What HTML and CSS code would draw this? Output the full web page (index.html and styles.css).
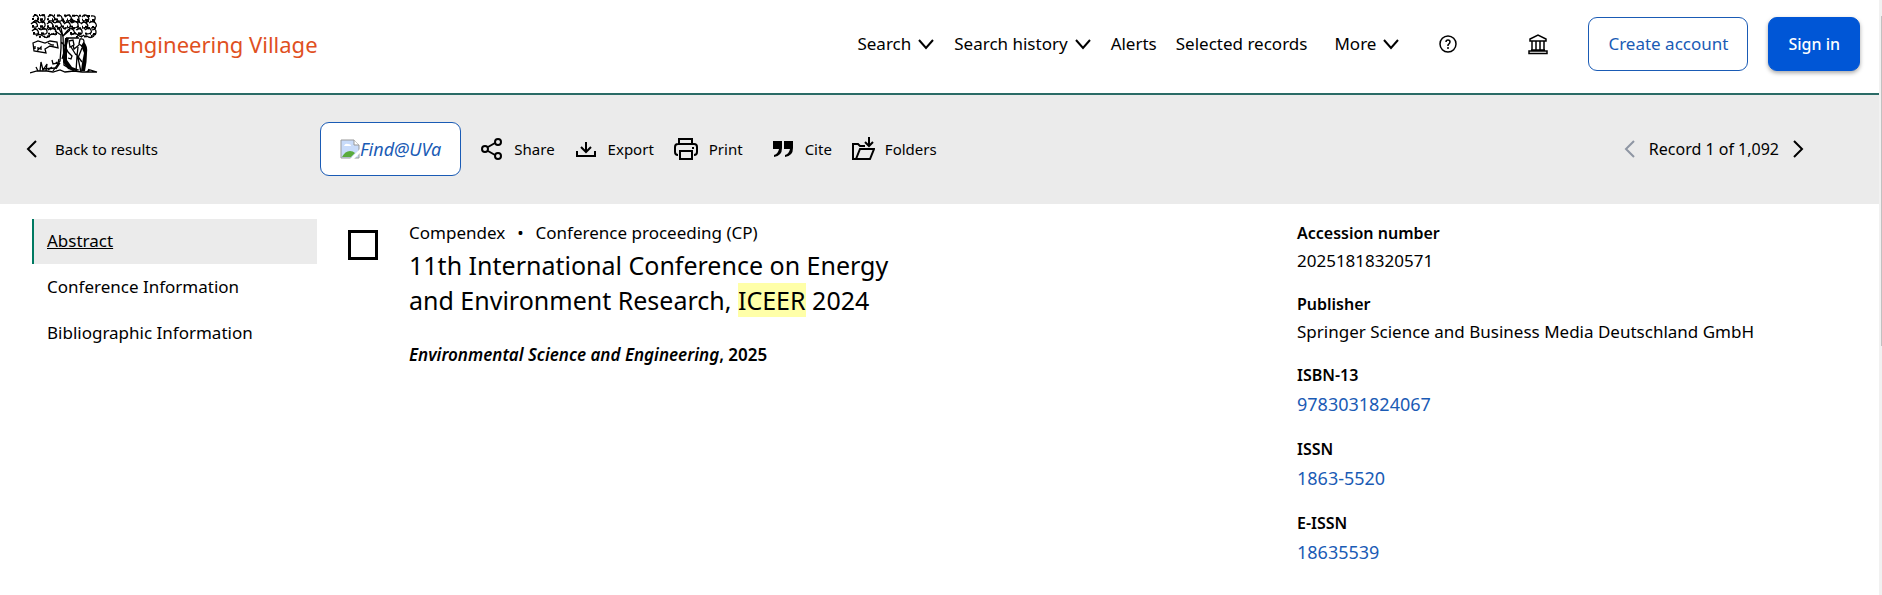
FILE: index.html
```html
<!DOCTYPE html>
<html lang="en">
<head>
    <meta charset="UTF-8">
    <meta name="viewport" content="width=device-width, initial-scale=1.0">
    <title>Engineering Village</title>
    <link rel="stylesheet" href="styles.css">
</head>
<body>
    <header class="header">
        <a class="brand" href="#">
            <svg class="logo" viewBox="0 0 68 60" width="68" height="60" aria-hidden="true">
                <!-- leaves -->
                <path d="M3 3q3-4 5 0t-4 4M10 2q5-3 5 2t-5 2M18 3q3-4 6 0t-5 4M27 2q4-2 5 2t-5 3M35 3q4-4 6 0t-5 4M44 2q5-2 5 3t-6 1M52 3q3-4 6 0t-5 4M61 2q5-1 4 3t-5 2"/>
                <path d="M1 10q4-4 6 0t-5 3M9 9q5-3 6 1t-5 4M17 10q4-4 6 1t-6 2M25 9q4-3 6 1t-4 4M34 10q4-4 6 0t-5 4M42 9q5-3 6 1t-5 4M51 10q3-4 6 0t-5 4M59 9q5-3 7 1t-5 4"/>
                <path d="M2 17q4-4 6 0t-5 3M11 16q5-3 6 1t-6 3M20 16q4-3 6 1t-5 3M38 16q4-3 6 1t-4 3M46 16q5-3 6 1t-5 4M55 16q4-4 6 0t-5 4M62 16q4-2 4 2t-4 3"/>
                <path d="M6 22q3-3 7 0t6 0 7-1M41 21q4-3 7 0t6 0M57 22q3 3 7 0M5 6l3 2M14 7l-2 2M22 7l3 2M32 6l2 3M40 7l2 2M48 8l3 1M58 7l-2 2M8 14l3 2M17 14l2 2M24 13l2 3M32 12l2 3M40 14l-1 2M49 14l-2 2M57 14l2 1"/>
                <path class="leaf-shade" d="M4 1l60 1M2 5l64 1M3 8l62-1M2 12l64 1M4 15l62-1M3 19l24 1M40 19l26 1M9 23l14-1M46 23l16-1"/>
                <!-- trunk and vine -->
                <path d="M25 17l6 4v13l-1 13-7 10M38 16l-5 6 1 29 10 6M31 14l2 9M33 22l7-6M28 13l5 9M31 28l4 4 3 6 4 4-1 3-3-1M34 38l-2 7M30 49l-4 6"/>
                <path class="fill" d="M35 24h4l-2 7v15l5 7 8 3-4 1-8-2-5-7z"/>
                <path d="M36 24h13M39 27l4-1 1 5-4 2zM41 33l5 8"/>
                <!-- banner -->
                <path d="M3 29l5-2 7 2 5-2 7 1 1 6-8-2-5 3 1 4-12-2zM5 32v3M8 33v3l3-3v3M18 29l4 2M23 30v2"/>
                <!-- scholar -->
                <path d="M50 25q4-1 4 3l-2 4-3-2zM49 31l-5 4-1-4M48 33l-1 9-1 16M52 34l-4 10 3 14M46 40l6 8"/>
                <path class="fill" d="M54 28q4 4 3 11 0 9-2 18h-4l1-8 2-10-3-7z"/>
                <!-- ground -->
                <path d="M22 46l1 4 5-1 1-4M26 48l2 2M10 57l1-9 2 8 4-6-1 7M8 57l-2-4M18 56l4-3"/>
                <path d="M0 59l7-2h10l6 1 7-2 5 2 9-1 8 1h15l-7-2-4 2M12 55l14-1M58 57l1-2"/>
            </svg>
            <span class="brand-name">Engineering Village</span>
        </a>
        <nav class="nav">
            <button class="nav-item" type="button">Search <svg width="18" height="12" viewBox="0 0 18 12"><path d="M2 2l7 8 7-8"/></svg></button>
            <button class="nav-item" type="button">Search history <svg width="18" height="12" viewBox="0 0 18 12"><path d="M2 2l7 8 7-8"/></svg></button>
            <a class="nav-item" href="#">Alerts</a>
            <a class="nav-item" href="#">Selected records</a>
            <button class="nav-item more" type="button">More <svg width="18" height="12" viewBox="0 0 18 12"><path d="M2 2l7 8 7-8"/></svg></button>
        </nav>
        <button class="icon-button help" type="button" aria-label="Help">
            <svg width="20" height="20" viewBox="0 0 20 20"><circle cx="10" cy="10" r="8"/><path d="M8 8q0-2 2-2t2 2q0 1-2 3v1M10 13v2"/></svg>
        </button>
        <button class="icon-button institution" type="button" aria-label="Institution">
            <svg width="20" height="22" viewBox="0 0 20 22"><path d="M2 8V6l8-4 8 4v2zM4 8v9M8 8v9M12 8v9M16 8v9M3 17h14M1 20.500v-2.500h18v2.500z"/></svg>
        </button>
        <button class="button create" type="button">Create account</button>
        <button class="button sign-in" type="button">Sign in</button>
    </header>

    <div class="toolbar">
        <a class="back" href="#"><svg width="14" height="20" viewBox="0 0 14 20"><path d="M12 2l-8 8 8 8"/></svg>Back to results</a>
        <div class="tools">
            <a class="button find" href="#">
                <svg width="20" height="20" viewBox="0 0 20 20" aria-hidden="true">
                    <path d="M1 1h13l5 5v13H1z" fill="#c8dbfa" stroke="#999"/>
                    <path d="M14 1v5h5" fill="#fff" stroke="#999"/>
                    <path d="M4 7q1-3 4-2 3 0 3 2z" fill="#fff" stroke="none"/>
                    <path d="M2 18q3-6 8-6 3 0 5 2l-4 4z" fill="#5aab3c" stroke="none"/>
                    <path d="M10 20L20 10v4l-6 6z" fill="#fff" stroke="none"/>
                </svg><em>Find@UVa</em>
            </a>
            <button class="tool" type="button"><svg width="24" height="24" viewBox="0 0 24 24"><circle cx="5" cy="12" r="3"/><circle cx="18" cy="5" r="3"/><circle cx="18" cy="19" r="3"/><path d="M8 10l7-4M8 14l7 4"/></svg>Share</button>
            <button class="tool" type="button"><svg width="24" height="24" viewBox="0 0 24 24"><path d="M3 14v5h18v-5M12 5v10M7 10l5 5 5-5"/></svg>Export</button>
            <button class="tool" type="button"><svg width="26" height="24" viewBox="0 0 26 24"><path d="M6 7V2h13v5M5 18q-3 0-3-3v-5q0-3 3-3h16q3 0 3 3v5q0 3-3 3M7 14h12v8H7zM19 11h2"/></svg>Print</button>
            <button class="tool cite" type="button"><svg width="24" height="24" viewBox="0 0 24 24"><path class="solid" d="M2 4h9v7q0 8-8 9v-2q4-1 5-6H2zM13 4h9v7q0 8-8 9v-2q4-1 5-6h-6z"/></svg>Cite</button>
            <button class="tool" type="button"><svg width="24" height="24" viewBox="0 0 24 24"><path d="M5 22H2V7h5l2 2h5M5 22l4-10h14l-4 10zM18 0v9M14 5l4 4 4-4"/></svg>Folders</button>
        </div>
        <div class="pager">
            <button class="page-button" type="button" aria-label="Previous record" disabled><svg width="14" height="20" viewBox="0 0 14 20"><path d="M12 2l-8 8 8 8"/></svg></button>
            <span>Record 1 of 1,092</span>
            <button class="page-button" type="button" aria-label="Next record"><svg width="14" height="20" viewBox="0 0 14 20"><path d="M2 2l8 8-8 8"/></svg></button>
        </div>
    </div>

    <main class="content">
        <nav class="sidebar">
            <a class="side-link active" href="#">Abstract</a>
            <a class="side-link" href="#">Conference Information</a>
            <a class="side-link" href="#">Bibliographic Information</a>
        </nav>
        <input class="select-record" type="checkbox" aria-label="Select record">
        <article class="record">
            <p class="source"><span>Compendex</span><span>•</span><span>Conference proceeding (CP)</span></p>
            <h1>11th International Conference on Energy and Environment Research, <mark>ICEER</mark> 2024</h1>
            <p class="journal"><em>Environmental Science and Engineering</em>, 2025</p>
        </article>
        <dl class="details">
            <dt>Accession number</dt>
            <dd>20251818320571</dd>
            <dt>Publisher</dt>
            <dd>Springer Science and Business Media Deutschland GmbH</dd>
            <dt>ISBN-13</dt>
            <dd><a href="#">9783031824067</a></dd>
            <dt>ISSN</dt>
            <dd><a href="#">1863-5520</a></dd>
            <dt>E-ISSN</dt>
            <dd><a href="#">18635539</a></dd>
        </dl>
    </main>
    <div class="scroll-track"><div class="scroll-thumb"></div></div>
</body>
</html>
```
FILE: styles.css
```css
* {
    box-sizing: border-box;
}
body {
    margin: 0;
    background: #fff;
    color: #000;
    font-family: "Noto Sans", sans-serif;
    font-size: 17px;
    line-height: 24px;
}
button {
    padding: 0;
    border: none;
    background: none;
    color: inherit;
    font: inherit;
    cursor: pointer;
}
a {
    color: inherit;
    text-decoration: none;
}
svg {
    flex: none;
    fill: none;
    stroke: currentColor;
    stroke-width: 2;
}
.header {
    display: flex;
    align-items: center;
    height: 95px;
    padding: 0 22px 6px 30px;
    border-bottom: 2px solid #2a6b66;
}
.brand {
    display: flex;
    align-items: center;
    gap: 20px;
    margin-right: auto;
    color: #e0501e;
    font-size: 22px;
}
.logo {
    color: #000;
    stroke-width: 1.3;
}
.logo .fill {
    fill: #000;
    stroke: none;
}
.leaf-shade {
    stroke-width: 2;
    stroke-dasharray: 2 3 1 2 3 4;
}
.nav {
    display: flex;
    align-items: center;
    gap: 19px;
}
.nav-item {
    display: flex;
    align-items: center;
    gap: 6px;
}
.more {
    margin-left: 8px;
}
.icon-button {
    display: flex;
}
.help {
    margin-left: 38px;
}
.icon-button svg {
    stroke-width: 1.5;
}
.institution {
    margin-left: 70px;
}
.button {
    display: flex;
    align-items: center;
    justify-content: center;
    height: 54px;
    padding: 0 19px;
    border: 1px solid #1a5bb5;
    border-radius: 9px;
    background: #fff;
    color: #1a5bb5;
}
.create {
    margin-left: 40px;
}
.sign-in {
    margin-left: 20px;
    border-color: #0056d6;
    background: #0056d6;
    color: #fff;
    font-size: 16px;
    font-weight: 500;
    box-shadow: 0 2px 4px rgba(0, 0, 0, 0.35);
}
.toolbar {
    display: flex;
    align-items: center;
    height: 109px;
    padding: 0 76px 2px 24px;
    background: #ebebeb;
}
.back {
    display: flex;
    align-items: center;
    gap: 17px;
    width: 296px;
    font-size: 15px;
}
.tools {
    display: flex;
    align-items: center;
    gap: 19px;
}
.find {
    font-size: 18px;
}
.find svg {
    stroke-width: 1;
}
.tool {
    display: flex;
    align-items: center;
    gap: 10px;
    font-size: 15px;
}
.cite {
    margin-left: 9px;
}
.solid {
    fill: #000;
    stroke: none;
}
.pager {
    display: flex;
    align-items: center;
    gap: 13px;
    margin-left: auto;
    font-size: 16px;
}
.page-button {
    display: flex;
}
.page-button:disabled {
    color: #8e96a3;
}
.content {
    display: flex;
    align-items: flex-start;
    padding: 15px 20px 0 32px;
}
.sidebar {
    display: flex;
    flex-direction: column;
    gap: 1px;
    width: 285px;
}
.side-link {
    padding: 10px 13px 11px;
    border-left: 2px solid transparent;
}
.active {
    border-left-color: #007a62;
    background: #ebebeb;
    text-decoration: underline;
}
.select-record {
    appearance: none;
    width: 30px;
    height: 30px;
    margin: 11px 31px 0;
    border: 3px solid #000;
}
.record {
    width: 500px;
}
.record p,
.record h1 {
    margin: 0;
}
.source {
    display: flex;
    gap: 12px;
    padding-top: 2px;
}
.record h1 {
    padding-top: 3px;
    font-size: 25px;
    font-weight: 400;
    line-height: 35px;
}
.record mark {
    background: #ffffa8;
}
.record .journal {
    margin-top: 25px;
    font-weight: 600;
}
.details {
    margin: 2px 0 0 auto;
    width: 565px;
}
.details dt {
    font-size: 16px;
    font-weight: 600;
}
.details dd {
    margin: 4px 0 19px;
}
.details a {
    display: block;
    color: #1a5bb5;
    font-size: 18px;
    line-height: 27px;
}
.scroll-track {
    position: fixed;
    top: 0;
    right: 0;
    bottom: 0;
    width: 3px;
    padding-top: 16px;
    background: #f1f1f1;
}
.scroll-thumb {
    width: 1px;
    height: 57%;
    margin-left: auto;
    background: #c1c1c1;
}
```
